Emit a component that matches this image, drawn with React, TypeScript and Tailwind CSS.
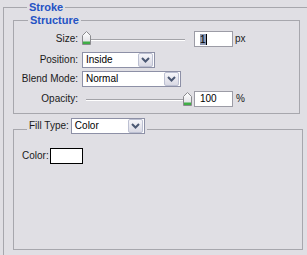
import React from "react";

const font = { fontFamily: '"Liberation Sans", Arial, sans-serif' };

function Chevron() {
  return (
    <svg width="9" height="6" viewBox="0 0 9 6">
      <path d="M1 1 L4.5 4.5 L8 1" fill="none" stroke="#4b5873" strokeWidth="2" />
    </svg>
  );
}

function Select({ className, text }: { className: string; text: string }) {
  return (
    <div className={`flex h-[16px] items-center border border-[#8d90a6] bg-white ${className}`}>
      <span className="flex-1 pl-[3px] text-[10px] leading-[14px] text-black">{text}</span>
      <div className="mr-px flex h-[14px] w-[15px] items-center justify-center rounded-[2px] border border-[#bcc0d2] bg-gradient-to-b from-[#f6f6fa] to-[#d9d9e4]">
        <Chevron />
      </div>
    </div>
  );
}

function Thumb({ id }: { id: string }) {
  return (
    <svg width="9" height="14" viewBox="0 0 9 14" className="absolute">
      <defs>
        <linearGradient id={id} x1="0" y1="0" x2="0" y2="1">
          <stop offset="0" stopColor="#ffffff" />
          <stop offset="1" stopColor="#dcdce2" />
        </linearGradient>
      </defs>
      <path d="M4.5 0.5 L8.5 4.5 V13.5 H0.5 V4.5 Z" fill={`url(#${id})`} stroke="#8a8a8e" />
      <rect x="1" y="10.5" width="7" height="2.5" fill="#3fae46" />
    </svg>
  );
}

function Slider({ pos }: { pos: "start" | "end" }) {
  return (
    <div className="relative h-[16px] w-[108px]">
      <div className="absolute left-[4px] right-[5px] top-[8px] h-[2px] border-t border-[#a3a3a8] bg-white" />
      <div className={pos === "start" ? "absolute left-0 top-0" : "absolute left-[101px] top-[1px]"}>
        <Thumb id={pos === "start" ? "tg1" : "tg2"} />
      </div>
    </div>
  );
}

function Label({ children }: { children: React.ReactNode }) {
  return <div className="w-[64px] text-right text-[10px] leading-[14px] text-[#1a1a1a]">{children}</div>;
}

export default function App() {
  return (
    <div className="h-[255px] w-[307px] overflow-hidden bg-[#e0dfe4]" style={font}>
      <fieldset className="ml-[3px] w-[312px] border border-[#a7a7ad] pb-[20px] pl-[9px]">
        <legend className="ml-[14px] px-[2px] text-[11px] font-bold leading-[14px] text-[#2553c4]">Stroke</legend>
        <fieldset className="-mt-px w-[287px] border border-[#a7a7ad] pb-[6px] pt-[4px]">
          <legend className="ml-[14px] px-[2px] text-[11px] font-bold leading-[14px] text-[#2553c4]">Structure</legend>
          <div className="flex h-[16px] items-center">
            <Label>Size:</Label>
            <div className="ml-[4px]">
              <Slider pos="start" />
            </div>
            <div className="ml-[4px] flex h-[16px] w-[39px] items-center border border-[#9c9ca6] bg-white pl-[5px]">
              <span className="border-r border-black bg-[#8e9ab4] text-[10px] leading-[11px] text-black">1</span>
            </div>
            <span className="ml-[2px] text-[10px] leading-[14px] text-[#1a1a1a]">px</span>
          </div>
          <div className="mt-[5px] flex h-[16px] items-center">
            <Label>Position:</Label>
            <Select className="ml-[4px] w-[73px]" text="Inside" />
          </div>
          <div className="mt-[3px] flex h-[16px] items-center">
            <Label>Blend Mode:</Label>
            <Select className="ml-[4px] w-[99px]" text="Normal" />
          </div>
          <div className="mt-[4px] flex h-[16px] items-center">
            <Label>Opacity:</Label>
            <div className="ml-[4px]">
              <Slider pos="end" />
            </div>
            <div className="ml-[4px] flex h-[16px] w-[39px] items-center border border-[#9c9ca6] bg-white pl-[5px]">
              <span className="text-[10px] leading-[14px] text-black">100</span>
            </div>
            <span className="ml-[3px] text-[10px] leading-[14px] text-[#1a1a1a]">%</span>
          </div>
        </fieldset>
        <fieldset className="mt-[4px] h-[132px] w-[290px] border border-[#a7a7ad]">
          <legend className="ml-[13px] flex items-center px-[2px] pb-[6px]">
            <span className="text-[10px] leading-[14px] text-[#1a1a1a]">Fill Type:</span>
            <Select className="ml-[2px] w-[74px]" text="Color" />
          </legend>
          <div className="flex items-center pl-[8px] pt-[8px]">
            <span className="text-[10px] leading-[14px] text-[#1a1a1a]">Color:</span>
            <div className="ml-px h-[16px] w-[33px] border border-black bg-white" />
          </div>
        </fieldset>
      </fieldset>
    </div>
  );
}
